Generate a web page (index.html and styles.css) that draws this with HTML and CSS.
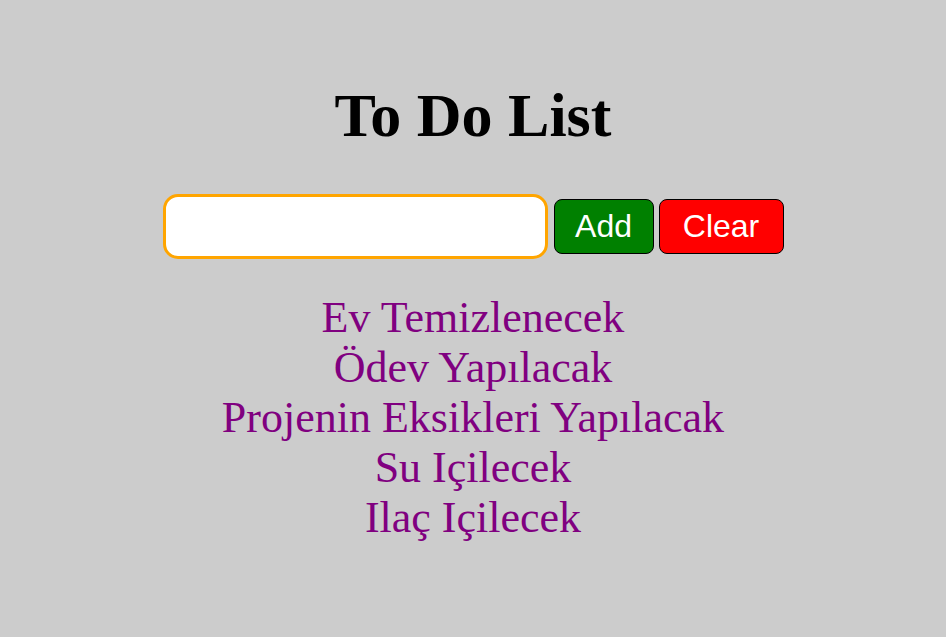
FILE: index.html
```html
<!DOCTYPE html>
<html>
<head>
<meta charset="utf-8">
<title>To Do List</title>
<link rel="stylesheet" href="styles.css">
</head>
<body>
<main class="app">
  <h1 class="title">To Do List</h1>
  <form class="entry">
    <input class="entry-input" type="text">
    <button type="button" class="btn btn-add">Add</button>
    <button type="button" class="btn btn-clear">Clear</button>
  </form>
  <ul class="list">
    <li>Ev Temizlenecek</li>
    <li>Ödev Yapılacak</li>
    <li>Projenin Eksikleri Yapılacak</li>
    <li>Su Içilecek</li>
    <li>Ilaç Içilecek</li>
  </ul>
</main>
</body>
</html>
```

FILE: styles.css
```css
html, body {
  margin: 0;
  padding: 0;
  background: #cccccc;
}
body {
  font-family: "Liberation Serif", "Times New Roman", serif;
}
.app {
  display: flex;
  flex-direction: column;
  align-items: center;
  padding-top: 80px;
}
.title {
  margin: 0;
  font-size: 62px;
  font-weight: bold;
  color: #000;
  line-height: normal;
}
.entry {
  display: flex;
  align-items: center;
  gap: 5px;
  margin-top: 43px;
}
.entry-input {
  box-sizing: border-box;
  width: 385px;
  height: 65px;
  border: 3px solid orange;
  border-radius: 15px;
  background: #fff;
  outline: none;
  margin-right: 1px;
}
.btn {
  box-sizing: border-box;
  height: 55px;
  border: 1px solid #000;
  border-radius: 8px;
  color: #fff;
  font-family: "Liberation Sans", Arial, sans-serif;
  font-size: 32px;
  padding: 0;
}
.btn-add {
  width: 100px;
  background: #008000;
}
.btn-clear {
  width: 125px;
  background: #ff0000;
}
.list {
  list-style: none;
  margin: 34px 0 0;
  padding: 0;
  text-align: center;
  color: #800080;
  font-size: 44px;
  line-height: 50px;
}
```
